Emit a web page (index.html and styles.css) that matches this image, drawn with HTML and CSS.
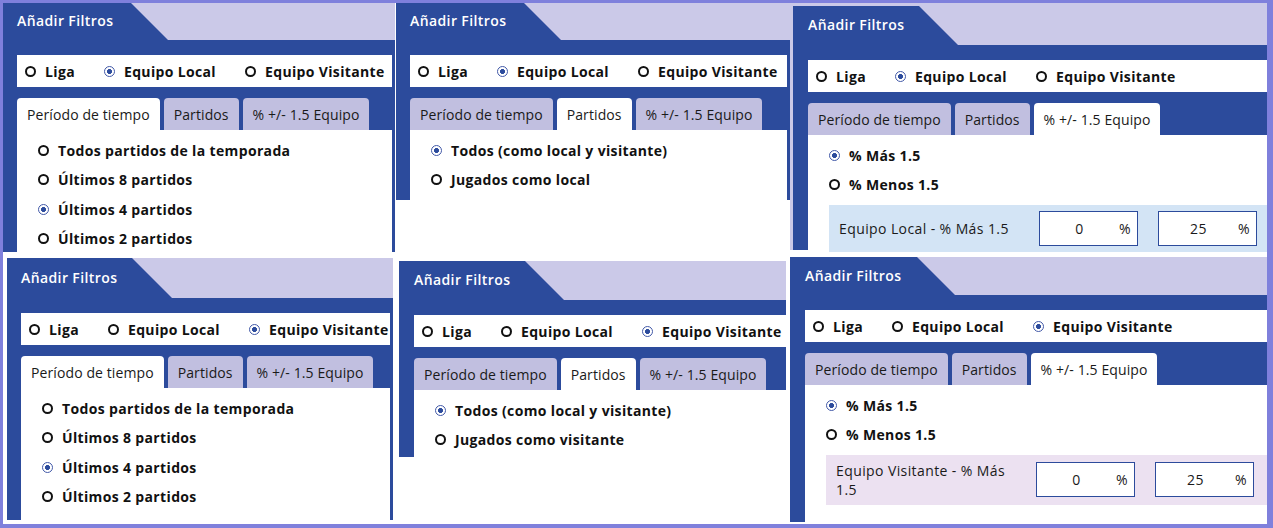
FILE: index.html
```html
<!DOCTYPE html>
<html lang="es">
<head>
  <meta charset="UTF-8" />
  <title>Añadir Filtros</title>
  <link rel="stylesheet" href="styles.css">
</head>
<body>
<div class="frame">

  <div class="row top">
    <section class="panel p1">
      <div class="head"><div class="title">Añadir Filtros</div></div>
      <div class="body">
        <div class="scope">
          <span class="opt"><i class="dot"></i>Liga</span>
          <span class="opt"><i class="dot on"></i>Equipo Local</span>
          <span class="opt"><i class="dot"></i>Equipo Visitante</span>
        </div>
        <div class="tabs">
          <div class="tab active">Período de tiempo</div>
          <div class="tab">Partidos</div>
          <div class="tab">% +/- 1.5 Equipo</div>
        </div>
        <div class="pane">
          <div class="opt"><i class="dot"></i>Todos partidos de la temporada</div>
          <div class="opt"><i class="dot"></i>Últimos 8 partidos</div>
          <div class="opt"><i class="dot on"></i>Últimos 4 partidos</div>
          <div class="opt"><i class="dot"></i>Últimos 2 partidos</div>
        </div>
      </div>
    </section>

    <section class="panel p2">
      <div class="head"><div class="title">Añadir Filtros</div></div>
      <div class="body">
        <div class="scope">
          <span class="opt"><i class="dot"></i>Liga</span>
          <span class="opt"><i class="dot on"></i>Equipo Local</span>
          <span class="opt"><i class="dot"></i>Equipo Visitante</span>
        </div>
        <div class="tabs">
          <div class="tab">Período de tiempo</div>
          <div class="tab active">Partidos</div>
          <div class="tab">% +/- 1.5 Equipo</div>
        </div>
        <div class="pane">
          <div class="opt"><i class="dot on"></i>Todos (como local y visitante)</div>
          <div class="opt"><i class="dot"></i>Jugados como local</div>
        </div>
      </div>
    </section>

    <section class="panel p3">
      <div class="head"><div class="title">Añadir Filtros</div></div>
      <div class="body">
        <div class="scope">
          <span class="opt"><i class="dot"></i>Liga</span>
          <span class="opt"><i class="dot on"></i>Equipo Local</span>
          <span class="opt"><i class="dot"></i>Equipo Visitante</span>
        </div>
        <div class="tabs">
          <div class="tab">Período de tiempo</div>
          <div class="tab">Partidos</div>
          <div class="tab active">% +/- 1.5 Equipo</div>
        </div>
        <div class="pane">
          <div class="opt"><i class="dot on"></i>% Más 1.5</div>
          <div class="opt"><i class="dot"></i>% Menos 1.5</div>
          <div class="range local">
            <span class="range-label">Equipo Local - % Más 1.5</span>
            <span class="num"><b>0</b>%</span>
            <span class="num"><b>25</b>%</span>
          </div>
        </div>
      </div>
    </section>
  </div>

  <div class="row bottom">
    <section class="panel p4">
      <div class="head"><div class="title">Añadir Filtros</div></div>
      <div class="body">
        <div class="scope">
          <span class="opt"><i class="dot"></i>Liga</span>
          <span class="opt"><i class="dot"></i>Equipo Local</span>
          <span class="opt"><i class="dot on"></i>Equipo Visitante</span>
        </div>
        <div class="tabs">
          <div class="tab active">Período de tiempo</div>
          <div class="tab">Partidos</div>
          <div class="tab">% +/- 1.5 Equipo</div>
        </div>
        <div class="pane">
          <div class="opt"><i class="dot"></i>Todos partidos de la temporada</div>
          <div class="opt"><i class="dot"></i>Últimos 8 partidos</div>
          <div class="opt"><i class="dot on"></i>Últimos 4 partidos</div>
          <div class="opt"><i class="dot"></i>Últimos 2 partidos</div>
        </div>
      </div>
    </section>

    <section class="panel p5">
      <div class="head"><div class="title">Añadir Filtros</div></div>
      <div class="body">
        <div class="scope">
          <span class="opt"><i class="dot"></i>Liga</span>
          <span class="opt"><i class="dot"></i>Equipo Local</span>
          <span class="opt"><i class="dot on"></i>Equipo Visitante</span>
        </div>
        <div class="tabs">
          <div class="tab">Período de tiempo</div>
          <div class="tab active">Partidos</div>
          <div class="tab">% +/- 1.5 Equipo</div>
        </div>
        <div class="pane">
          <div class="opt"><i class="dot on"></i>Todos (como local y visitante)</div>
          <div class="opt"><i class="dot"></i>Jugados como visitante</div>
        </div>
      </div>
    </section>

    <section class="panel p6">
      <div class="head"><div class="title">Añadir Filtros</div></div>
      <div class="body">
        <div class="scope">
          <span class="opt"><i class="dot"></i>Liga</span>
          <span class="opt"><i class="dot"></i>Equipo Local</span>
          <span class="opt"><i class="dot on"></i>Equipo Visitante</span>
        </div>
        <div class="tabs">
          <div class="tab">Período de tiempo</div>
          <div class="tab">Partidos</div>
          <div class="tab active">% +/- 1.5 Equipo</div>
        </div>
        <div class="pane">
          <div class="opt"><i class="dot on"></i>% Más 1.5</div>
          <div class="opt"><i class="dot"></i>% Menos 1.5</div>
          <div class="range away">
            <span class="range-label">Equipo Visitante - % Más 1.5</span>
            <span class="num"><b>0</b>%</span>
            <span class="num"><b>25</b>%</span>
          </div>
        </div>
      </div>
    </section>
  </div>

</div>
</body>
</html>
```

FILE: styles.css
```css
:root {
  --blue: #2c4b9c;
  --lilac: #cbc9e8;
  --tab: #c1bfe0;
  --frame: #7f80dc;
  --ink: #111111;
  --sky: #d3e4f5;
  --rose: #ece1f1;
}

body {
  margin: 0;
  font-family: 'Open Sans', 'Noto Sans', sans-serif;
  color: var(--ink);
}

.frame {
  width: 1273px;
  height: 528px;
  box-sizing: border-box;
  border: solid var(--frame);
  border-width: 3px 6px 4px 3px;
  background: #fff;
  display: flex;
  flex-direction: column;
}

.row {
  display: flex;
  align-items: flex-start;
}

.row.top {
  height: 254px;
}

/* panel */
.panel {
  --head: 37px;
  --pl: 14px;
  --pr: 3px;
  display: flex;
  flex-direction: column;
  box-sizing: border-box;
  background: var(--blue);
}

.p1 { width: 392px; height: 249px; --pr: 3px; }
.p2 { width: 394px; height: 197px; margin-left: 1px; }
.p3 {
  width: 477px;
  height: 247px;
  --head: 39px;
  --pl: 15px;
  --pr: 0px;
  border-top: 3px solid var(--lilac);
  border-left: 3px solid var(--lilac);
}
.p4 { width: 386px; height: 262px; margin: 1px 0 0 4px; --head: 40px; }
.p5 { width: 387px; height: 196px; margin: 4px 0 0 6px; --head: 39px; --pl: 15px; --pr: 0px; }
.p6 { width: 477px; height: 265px; margin-left: 4px; --head: 38px; --pl: 15px; --pr: 0px; }

.head {
  flex: none;
  height: var(--head);
  background: var(--lilac);
}

.title {
  width: 165px;
  height: 100%;
  box-sizing: border-box;
  padding-left: var(--pl);
  background: var(--blue);
  clip-path: polygon(0 0, calc(100% - var(--head)) 0, 100% 100%, 0 100%);
  color: #fff;
  font-size: 14px;
  font-weight: 600;
  letter-spacing: 0.4px;
  line-height: calc(var(--head) - 1px);
}

.body {
  flex: 1;
  min-height: 0;
  display: flex;
  flex-direction: column;
  padding: 15px var(--pr) 0 var(--pl);
}

/* radios */
.opt {
  display: flex;
  align-items: center;
  gap: 9px;
  font-size: 14px;
  font-weight: 700;
  letter-spacing: 0.35px;
  white-space: nowrap;
}

.dot {
  flex: none;
  width: 11px;
  height: 11px;
  box-sizing: border-box;
  border: 2px solid var(--ink);
  border-radius: 50%;
  background: #fff;
}

.dot.on {
  border: 1.5px solid #4259a8;
  background: radial-gradient(circle, var(--blue) 0 2.2px, #fff 2.8px);
}

.scope {
  flex: none;
  height: 32px;
  display: flex;
  align-items: center;
  gap: 29px;
  padding-left: 8px;
  background: #fff;
}

/* tabs */
.tabs {
  flex: none;
  display: flex;
  gap: 4px;
  margin-top: 11px;
}

.tab {
  height: 32px;
  padding: 0 10px;
  display: flex;
  align-items: center;
  border-radius: 4px 4px 0 0;
  background: var(--tab);
  color: #1a1a1a;
  font-size: 14px;
  font-weight: 500;
  letter-spacing: 0.1px;
}

.tab.active {
  background: #fff;
}

.pane {
  flex: 1;
  padding: 6px 0 0 21px;
  background: #fff;
}

.pane .opt {
  height: 29.3px;
}

/* range row */
.range {
  margin-top: 5px;
  padding: 6px 10px;
  display: flex;
  align-items: center;
  font-size: 14px;
  font-weight: 500;
  letter-spacing: 0.4px;
  color: #1a1a1a;
}

.range.local { background: var(--sky); }
.range.away { background: var(--rose); }

.range-label {
  width: 180px;
  margin-right: 20px;
  line-height: 19px;
}

.num {
  width: 99px;
  height: 35px;
  box-sizing: border-box;
  margin-right: 20px;
  padding-right: 6px;
  display: flex;
  align-items: center;
  border: 1px solid var(--blue);
  background: #fff;
}

.num:last-child {
  margin-right: 0;
}

.num b {
  flex: 1;
  text-align: center;
  font-weight: 500;
}
```
